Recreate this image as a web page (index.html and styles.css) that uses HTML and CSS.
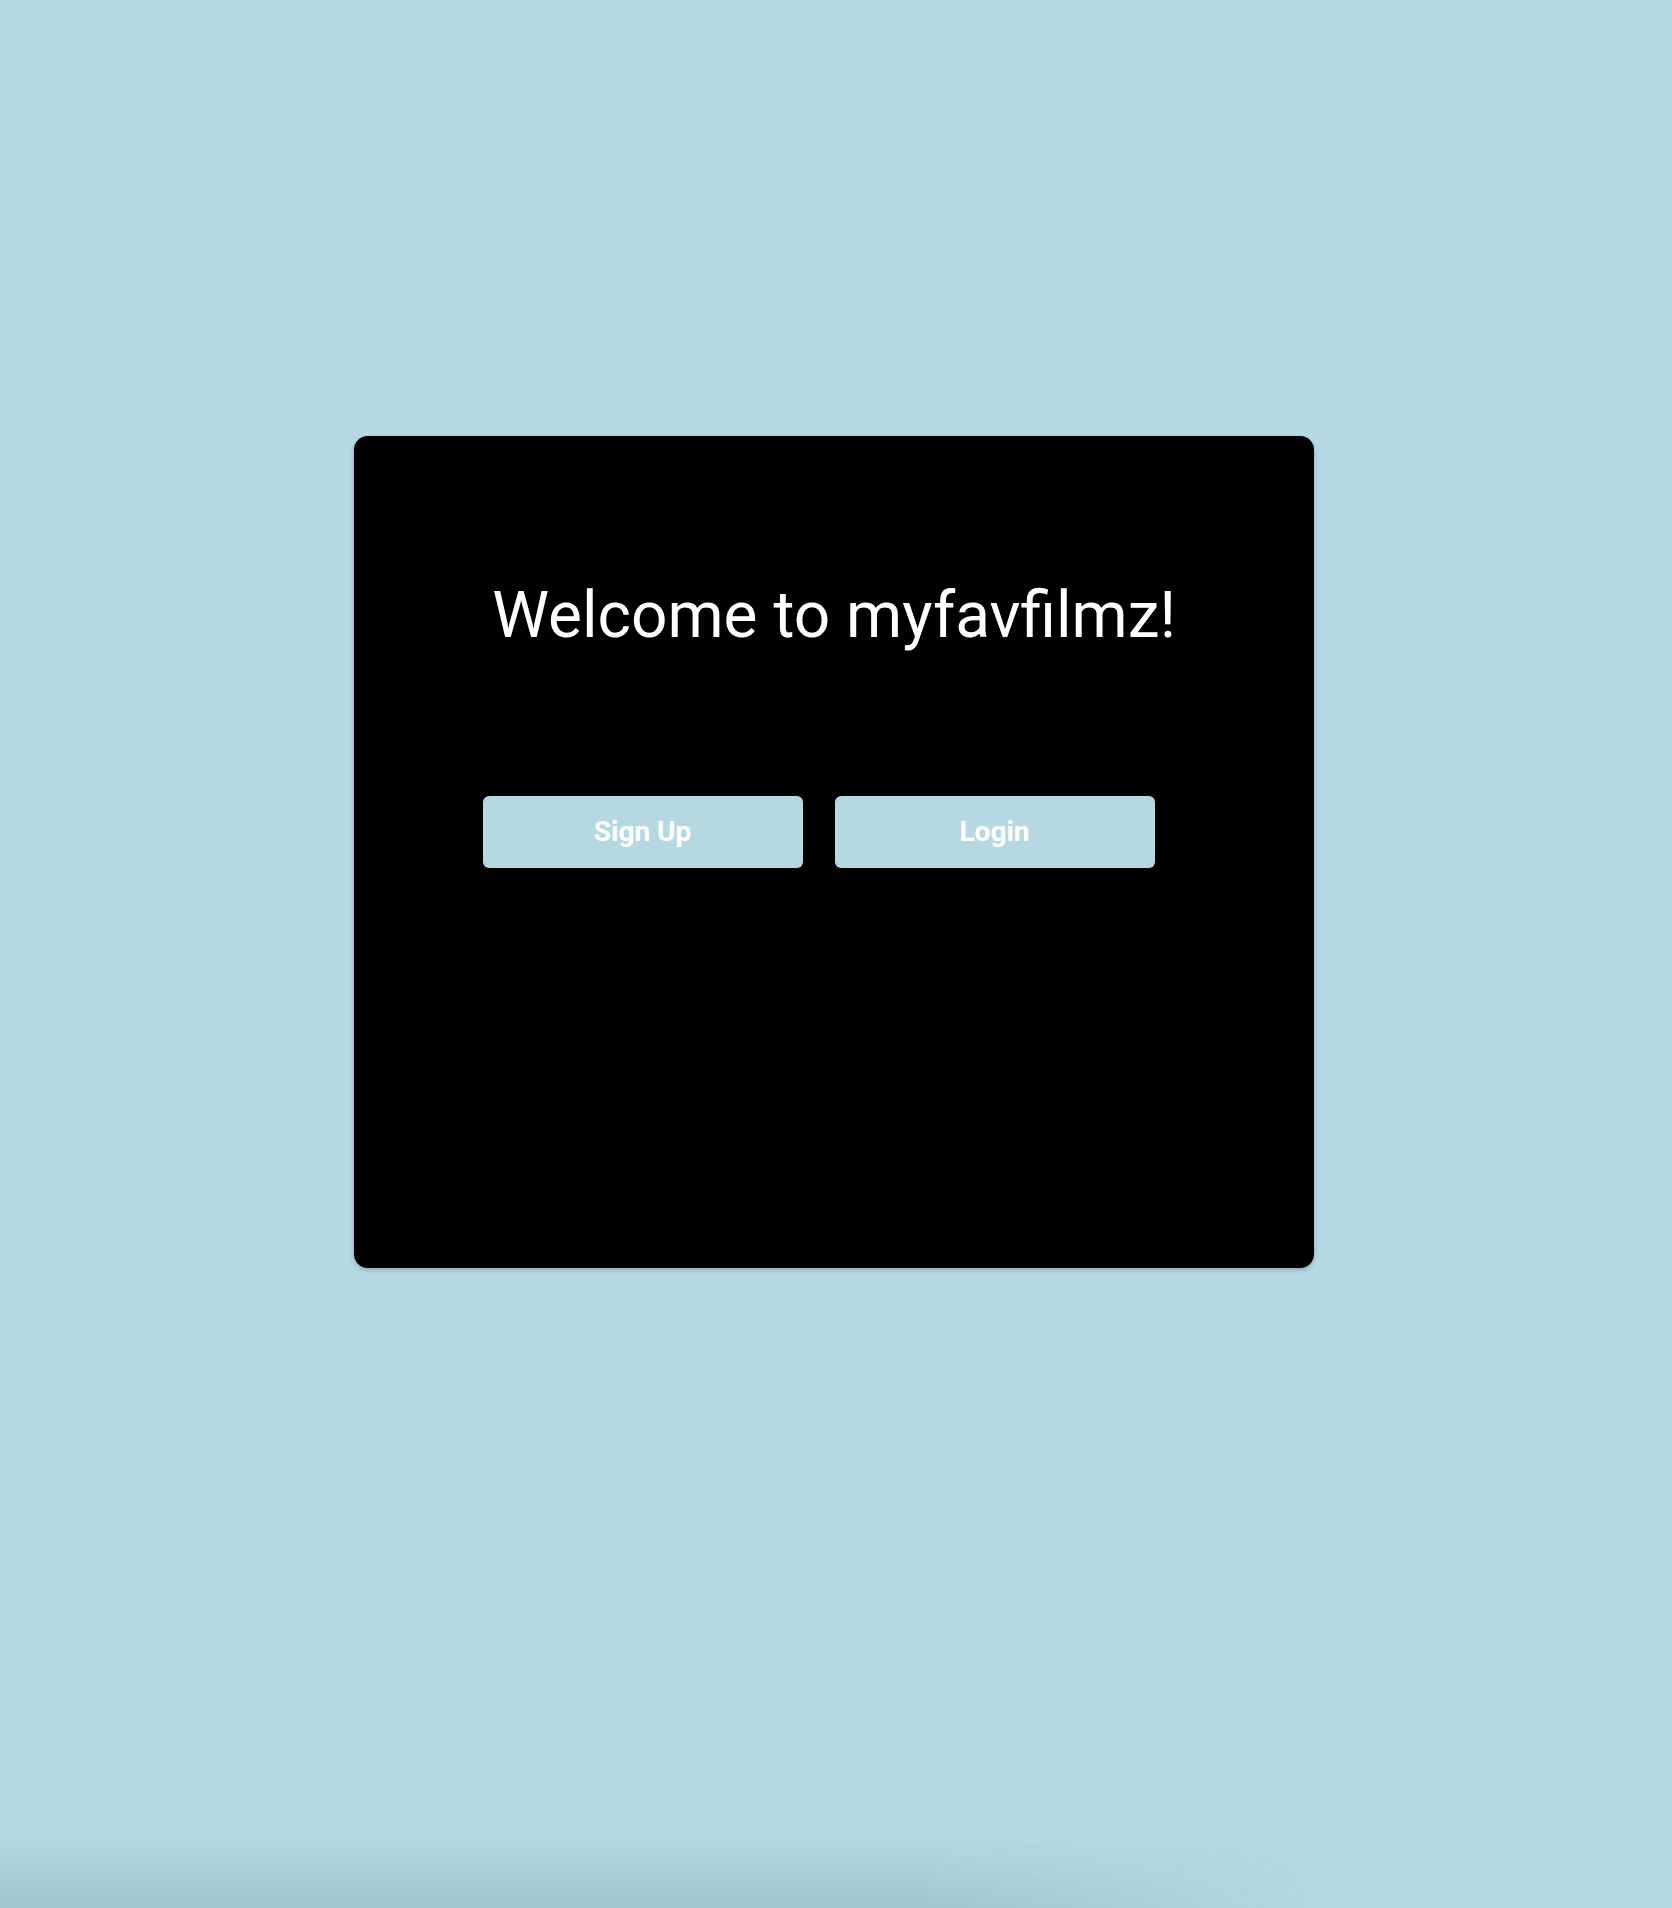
FILE: index.html
```
<!DOCTYPE html>
<html lang="en">
<head>
<meta charset="utf-8">
<title>myfavfilmz</title>
<link rel="stylesheet" href="styles.css">
</head>
<body>
<main class="page">
  <section class="card">
    <h1 class="title">Welcome to myfavfilmz!</h1>
    <div class="actions">
      <button class="btn">Sign Up</button>
      <button class="btn">Login</button>
    </div>
  </section>
</main>
<div class="bottom-shade"></div>
</body>
</html>
```

FILE: styles.css
```
html, body {
  margin: 0;
  padding: 0;
}
body {
  background: #b5d8e3;
  font-family: Roboto, "Liberation Sans", Arial, sans-serif;
  min-height: 1908px;
  position: relative;
  overflow: hidden;
}
.page {
  display: flex;
  justify-content: center;
  padding-top: 436px;
  padding-right: 4px;
}
.card {
  width: 960px;
  height: 832px;
  box-sizing: border-box;
  background: #000;
  border-radius: 14px;
  box-shadow: 0 2px 4px rgba(0, 0, 0, 0.22);
  display: flex;
  flex-direction: column;
  align-items: center;
  padding-top: 143px;
}
.title {
  margin: 0;
  color: #fff;
  font-weight: 400;
  font-size: 64px;
  line-height: 73px;
}
.actions {
  display: flex;
  gap: 32px;
  margin-top: 144px;
  padding-right: 31px;
}
.btn {
  width: 320px;
  height: 72px;
  padding: 0 0 2px;
  border: none;
  border-radius: 6px;
  background: #b5d8e3;
  color: #fff;
  font-family: Roboto, "Liberation Sans", Arial, sans-serif;
  font-weight: 700;
  font-size: 28px;
  cursor: pointer;
}
.bottom-shade {
  position: absolute;
  left: 0;
  bottom: 0;
  width: 1320px;
  height: 70px;
  background: linear-gradient(to bottom, rgba(60, 100, 115, 0), rgba(60, 100, 115, 0.16));
  -webkit-mask-image: linear-gradient(to right, #000 0%, #000 70%, transparent 100%);
  mask-image: linear-gradient(to right, #000 0%, #000 70%, transparent 100%);
  pointer-events: none;
}
```
